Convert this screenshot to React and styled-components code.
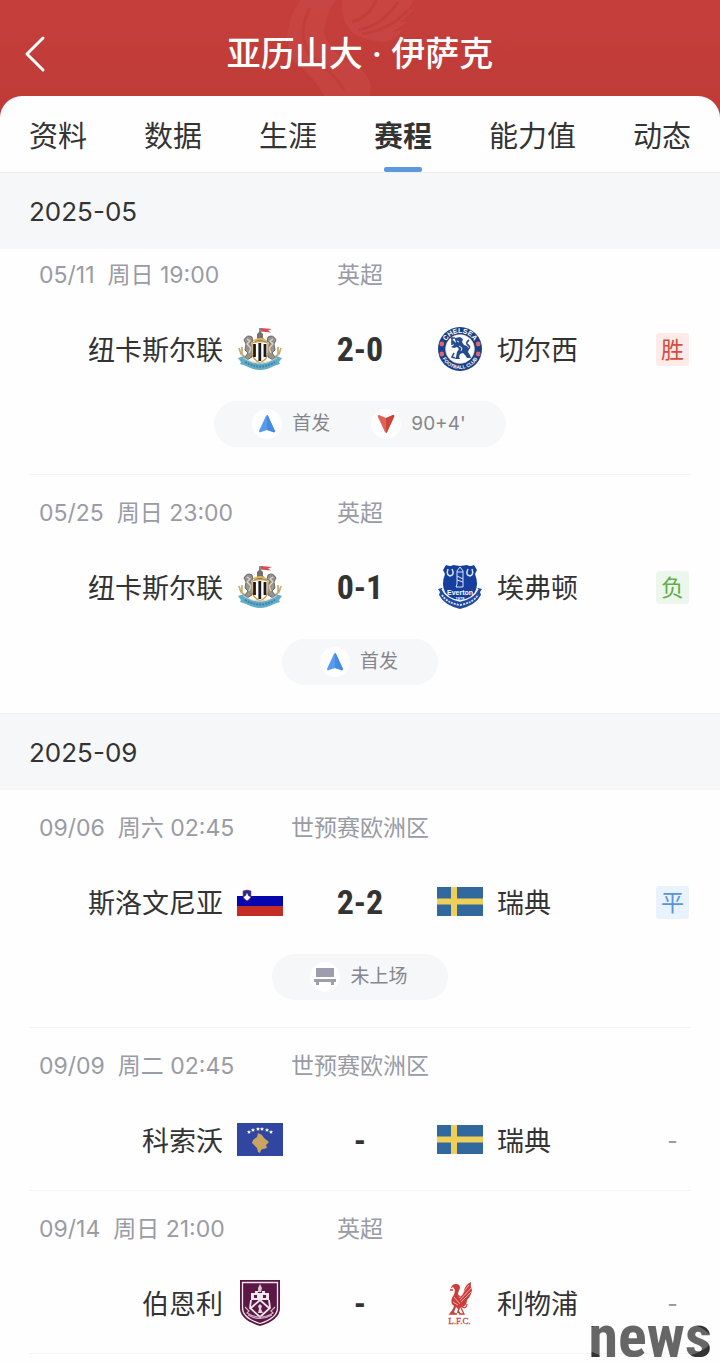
import styled, { createGlobalStyle, css } from "styled-components";

const GlobalStyle = createGlobalStyle`
    * {
        box-sizing: border-box;
    }
    body {
        margin: 0;
        background: #fefefe;
        color: #333;
        font-family: Inter, "Noto Sans CJK SC", sans-serif;
    }
    h1, h2, p, ul {
        margin: 0;
        padding: 0;
        font-weight: 400;
        list-style: none;
    }
    button {
        border: 0;
        padding: 0;
        background: none;
        color: inherit;
        font: inherit;
        cursor: pointer;
    }
`;

const fontCjk = `"Noto Sans CJK SC", sans-serif`;

const Page = styled.div`
    min-height: 100vh;
    background: #c03b37;
`;

const Header = styled.header`
    display: grid;
    grid-template-columns: 40px 1fr 40px;
    align-items: center;
    height: 96px;
    padding: 12px 15px 0;
    position: relative;
    background: linear-gradient(#c63e3b, #bf3c37);
`;

const HeaderBird = styled.svg`
    position: absolute;
    top: 0;
    left: 50%;
    width: 160px;
    height: 96px;
    transform: translateX(-50%);
    opacity: 0.6;
`;

const BackButton = styled.button`
    display: flex;
    align-items: center;
    justify-content: center;
    height: 44px;
    color: #fff;
`;

const Title = styled.h1`
    position: relative;
    color: #fff;
    font-family: Inter, ${fontCjk};
    font-size: 34px;
    font-weight: 500;
    line-height: 40px;
    text-align: center;
`;

const Panel = styled.main`
    min-height: calc(100vh - 96px);
    border-radius: 22px 22px 0 0;
    background: #fefefe;
    overflow: hidden;
`;

const Tabs = styled.nav`
    display: flex;
    justify-content: space-between;
    height: 76px;
    padding: 0 29px;
`;

const Tab = styled.button`
    display: flex;
    flex-direction: column;
    align-items: center;
    justify-content: space-between;
    padding-top: 17px;
    font-family: ${fontCjk};
    font-size: 29px;
    line-height: 42px;
    ${({ $active }) => $active && css`
        font-weight: 700;
        &::after {
            content: "";
            width: 38px;
            height: 5px;
            border-radius: 2px;
            background: #5b98dd;
        }
    `}
`;

const Month = styled.h2`
    height: 77px;
    padding: 0 29px;
    border-top: 1px solid #eceff3;
    background: #f6f7f9;
    font-size: 26px;
    line-height: 77px;
`;

const MatchList = styled.ul`
    padding: 0 29px;
`;

const Match = styled.li`
    padding: ${({ $tight }) => ($tight ? 14 : 26)}px 0 27px;
    border-bottom: 1px solid #f3f4f6;
    &:last-child {
        border-bottom-color: ${({ $open }) => ($open ? "#f3f4f6" : "transparent")};
    }
`;

const Meta = styled.div`
    display: grid;
    grid-template-columns: 1fr auto 1fr;
    height: 24px;
    padding: 0 10px;
    color: #999ba5;
    font-size: 23px;
    line-height: 24px;
    white-space: pre;
`;

const Teams = styled.div`
    display: grid;
    grid-template-columns: 1fr 154px 1fr;
    align-items: center;
    height: 46px;
    margin-top: 39px;
`;

const Side = styled.div`
    display: flex;
    align-items: center;
    justify-content: ${({ $home }) => ($home ? "flex-end" : "flex-start")};
    gap: 14px;
    font-family: ${fontCjk};
    font-size: 27px;
    line-height: 40px;
`;

const Score = styled.strong`
    font-family: "Roboto Condensed", Roboto, sans-serif;
    font-size: 34px;
    line-height: 40px;
    text-align: center;
`;

const tones = {
    win: { color: "#d94a3f", background: "#fdebea" },
    loss: { color: "#5fae4b", background: "#edf6ec" },
    draw: { color: "#5695dc", background: "#e8f3fe" },
    none: { color: "#9a9a9a", background: "transparent" },
};

const Result = styled.span`
    width: 33px;
    height: 33px;
    margin: 0 2px 0 auto;
    border-radius: 3px;
    color: ${({ $tone }) => tones[$tone].color};
    background: ${({ $tone }) => tones[$tone].background};
    font-family: Inter, ${fontCjk};
    font-size: 23px;
    line-height: 34px;
    text-align: center;
`;

const Pill = styled.div`
    display: flex;
    align-items: center;
    gap: 41px;
    width: fit-content;
    height: 46px;
    margin: 29px auto 0;
    padding: 0 40px 0 38px;
    border-radius: 23px;
    background: #f6f7f9;
`;

const Status = styled.span`
    display: flex;
    align-items: center;
    gap: 10px;
    color: #85868c;
    font-size: 19px;
    line-height: 32px;
`;

const StatusIcon = styled.svg`
    width: 30px;
    height: 30px;
    border-radius: 50%;
    background: #fefefe;
`;

const Watermark = styled.p`
    position: fixed;
    right: 8px;
    bottom: 6px;
    color: transparent;
    background: radial-gradient(ellipse 66px 22px at 46% 56%, #666 98%, #333 100%);
    background-clip: text;
    font-family: "Roboto Condensed", "Liberation Sans", sans-serif;
    font-size: 60px;
    font-weight: 700;
    line-height: 40px;
`;

const CrestSvg = styled.svg`
    flex: none;
    width: 46px;
    height: 46px;
`;

const Newcastle = () => (
    <CrestSvg viewBox="0 0 46 46" aria-hidden="true">
        <path d="M23 2v13" stroke="#777064" strokeWidth="1.6" />
        <path d="M24 2l11 1-4 1.500 3 2-10-1z" fill="#d84b50" />
        <path d="M20 8l3-3 3 3v4l4 4H17l3-3z" fill="#777169" />
        <path d="M17 15q6-4 12 0" fill="none" stroke="#ddb35c" strokeWidth="2" />
        <path d="M7 14q3-6 8-3l1 4-3 2 3 6-1 8-5 3-2-3 3-4-3-3 1-6zM39 14q-3-6-8-3l-1 4 3 2-3 6 1 8 5 3 2-3-3-4 3-3-1-6z" fill="#97938e" stroke="#56534f" strokeWidth=".8" />
        <path d="M10 13l3 2-3 3 4 4-2 5M36 13l-3 2 3 3-4 4 2 5" fill="none" stroke="#ddd9d2" strokeWidth="1.200" />
        <path d="M15 17q8-3 16 0v9q0 7-8 11-8-4-8-11z" fill="#fff" stroke="#c69a45" strokeWidth="1.300" />
        <path d="M17.500 18v13M22.800 17v18M28 18v13" stroke="#1d1b1b" strokeWidth="2.800" />
        <path d="M2 22l2 6 4 3M44 22l-2 6-4 3M5 21v7M41 21v7" fill="none" stroke="#c5aa72" strokeWidth="1.700" />
        <path d="M1 32l6-2 3 4q13 7 26 0l3-4 6 2-3 4 1 2-6 2q-14 8-28 0l-6-2 1-2z" fill="#62abc9" />
        <path d="M8 36q15 9 30 0" fill="none" stroke="#3f84a3" strokeWidth="2" strokeDasharray="2 1" />
        <path d="M6 32q17 10 34 0" fill="none" stroke="#d9d0b5" strokeWidth=".9" />
    </CrestSvg>
);

const Chelsea = () => (
    <CrestSvg viewBox="0 0 46 46" aria-hidden="true">
        <circle cx="23" cy="23" r="22" fill="#1b3f82" />
        <circle cx="23" cy="23" r="14.500" fill="#fff" stroke="#d7c69d" strokeWidth=".5" />
        <defs>
            <path id="chelsea-top" d="M7 23a16 16 0 0 1 32 0" />
            <path id="chelsea-bottom" d="M3 23a20 20 0 0 0 40 0" />
        </defs>
        <g fill="#fff" fontFamily="Liberation Sans" fontWeight="700" textAnchor="middle">
            <text fontSize="7"><textPath href="#chelsea-top" startOffset="50%">CHELSEA</textPath></text>
            <text fontSize="5"><textPath href="#chelsea-bottom" startOffset="50%">FOOTBALL CLUB</textPath></text>
        </g>
        <g fill="#d8667a">
            <circle cx="4.800" cy="18" r="2.400" />
            <circle cx="4.800" cy="28" r="2.400" />
            <circle cx="41.200" cy="18" r="2.400" />
            <circle cx="41.200" cy="28" r="2.400" />
        </g>
        <path d="M18 12l5-1 3 2-1 3 2 3 3 1 2 3-1 3 2 3 1 3h-4l-2-3-2-2-3 1-1 3 1 2h-5l1-2 1-5 2-3-2-2-3 1-3-1 3-2-3-3 2-2 3 3-1-4z" fill="#244d91" />
        <path d="M15 12v7M14 12h4M29 24q6-2 2-5-3-2 1-5M17 27l-2 4 3 1" fill="none" stroke="#244d91" strokeWidth="1.600" />
        <path d="M20 15l2 1M22 20l3 2-1 3" fill="none" stroke="#fff" strokeWidth=".9" />
    </CrestSvg>
);

const Everton = () => (
    <CrestSvg viewBox="0 0 46 46" aria-hidden="true">
        <path d="M9 1q5 2 7 0l7 1 7-1q3 2 7 0l3 5-2 4q4 10 0 18-3 8-15 15Q11 36 8 28q-4-8 0-18L6 6z" fill="#153f9f" />
        <path d="M1 25l4-1q4 10 18 13 14-3 18-13l4 1-2 3 1 3q-5 10-21 14Q7 41 2 31l1-3z" fill="#224a9f" />
        <path d="M5 25q5 10 18 12 13-2 18-12" fill="none" stroke="#fff" strokeWidth="1.300" />
        <path d="M5 31q5 8 18 10 13-2 18-10" fill="none" stroke="#d4dded" strokeWidth="1.800" strokeDasharray="2 1" />
        <path d="M11 5q-2 6 2 7 5-1 2-7M31 5q-3 6 2 7 4-1 2-7" fill="none" stroke="#dce4f4" strokeWidth="1.500" />
        <path d="M20 7l3-4 3 4v16h-7l1-3zM20 8h6M20 12l6 3M20 16l6 2" fill="none" stroke="#dce4f4" strokeWidth="1" />
        <g fill="#fff" fontFamily="Liberation Sans" fontWeight="700" textAnchor="middle">
            <text x="23" y="31" fontSize="7">Everton</text>
            <text x="23" y="36" fontSize="4">1878</text>
        </g>
    </CrestSvg>
);

const Slovenia = () => (
    <CrestSvg viewBox="0 0 46 46" aria-hidden="true">
        <path d="M0 17h46v11H0z" fill="#0506ad" />
        <path d="M0 27h46v10H0z" fill="#c42d24" />
        <path d="M6 12q4-2 8 0v5q0 3-4 5-4-2-4-5z" fill="#24308f" stroke="#bd3649" strokeWidth=".6" />
        <path d="M6.500 18l2-1 1.500-3 1.500 3 2 1-1.500 2-2 1.500-2-1.500z" fill="#fff" />
    </CrestSvg>
);

const Sweden = () => (
    <CrestSvg viewBox="0 0 46 46" aria-hidden="true">
        <path d="M0 8h46v29H0z" fill="#31699e" />
        <path d="M0 19.500h46v6H0zM14 8h6v29h-6z" fill="#efcf57" />
    </CrestSvg>
);

const Kosovo = () => (
    <CrestSvg viewBox="0 0 46 46" aria-hidden="true">
        <path d="M0 6h46v33H0z" fill="#3146a0" />
        <path d="M21 16l4 2 2 3 5 4-3 3 1 3-4 1-2 1-1 3-2-1-1-4-5-5 1-3 4-3z" fill="#c9a562" />
        <path
            d="M12 13l.6 1.200 1.400.2-1 1 .2 1.400-1.200-.7-1.200.7.2-1.400-1-1 1.400-.2z"
            id="kosovo-star"
            fill="#fff"
        />
        {[[4, -2], [9, -3], [13, -3], [18, -2], [22, 0]].map(([x, y]) => (
            <use key={x} href="#kosovo-star" x={x} y={y} />
        ))}
    </CrestSvg>
);

const Burnley = () => (
    <CrestSvg viewBox="0 0 46 46" aria-hidden="true">
        <path d="M3 0h40v28q0 12-20 18Q3 40 3 28z" fill="#5c1744" />
        <path d="M5.500 2.500h35V28q0 10-17.500 15.500Q5.500 38 5.500 28z" fill="none" stroke="#efe7ec" strokeWidth="1.300" />
        <path d="M14 13h4v-2h3v2h4v-2h3v2h4v7H14z" fill="#efe7ec" />
        <path d="M23 4l2 4-1 4h-3V8z" fill="#d9c6d2" />
        <path d="M17 15h3v3h-3zM26 15h3v3h-3z" fill="#5c1744" />
        <path d="M14 20l-1 8 10 9 10-9-1-8M14 28l9-8 9 8" fill="none" stroke="#efe7ec" strokeWidth="1.800" />
        <path d="M21 26l2-2 2 2-1 3 2 4h-5l1-4z" fill="#e2d4dd" />
        <path d="M8 27l4 4-2 2q13 8 26 0l-2-2 4-4M11 35q12 7 24 0" fill="none" stroke="#cdb5c4" strokeWidth="1.200" />
    </CrestSvg>
);

const birdBody = "M14 8q1-4 5-4 4 0 4 4l-2 5q0 3 3 3 3-2 3-6 2-6 7-8-1 4 1 8-1 6-5 10 0 5-4 7l-3 1-1 3 2 3-4-1 1-4-2-2-2 5 2 2h-5l1-3 2-5q-4-3-2-8 3-4 3-8l-2-3-3 2z";

const Liverpool = () => (
    <CrestSvg viewBox="0 0 46 46" aria-hidden="true">
        <path d={birdBody} fill="#cb3e3b" />
        <path d="M22 18l10-13M23 20l11-12M24 22l10-10M17 17l6 7M16 22l5 3" fill="none" stroke="#f3c9c5" strokeWidth=".8" />
        <path d="M25 27q5 2 5-3M17 29l-4 5h7M24 28l3 6h-5M13 10h3" fill="none" stroke="#cb3e3b" strokeWidth="1.300" />
        <text x="22.500" y="44" fill="#c34643" stroke="#c34643" strokeWidth=".3" fontFamily="Liberation Serif" fontSize="9" textAnchor="middle">L.F.C.</text>
    </CrestSvg>
);

const statusIcons = {
    on: (
        <>
            <path d="M15 6q1 0 2 3l6 13q0 2-2 1l-6-2-6 2q-2 1-2-1l6-13q1-3 2-3z" fill="#559cef" />
            <path d="M15 6q1 0 2 3l6 13q0 2-2 1l-6-2z" fill="#458be4" />
        </>
    ),
    off: (
        <>
            <path d="M15 24q-1 0-2-3L7 8q-1-2 1-2l7 3 7-3q2 0 1 2l-6 13q-1 3-2 3z" fill="#e16257" />
            <path d="M15 24q1 0 2-3l6-13q1-2-1-2l-7 3z" fill="#c94439" />
        </>
    ),
    bench: <path d="M6 6h18v9H6zM4 17h22v3h-2v3h-3v-3H9v3H6v-3H4z" fill="#9c9dad" />,
};

const teams = {
    newcastle: ["纽卡斯尔联", Newcastle],
    chelsea: ["切尔西", Chelsea],
    everton: ["埃弗顿", Everton],
    slovenia: ["斯洛文尼亚", Slovenia],
    sweden: ["瑞典", Sweden],
    kosovo: ["科索沃", Kosovo],
    burnley: ["伯恩利", Burnley],
    liverpool: ["利物浦", Liverpool],
};

const tabs = ["资料", "数据", "生涯", "赛程", "能力值", "动态"];

const months = [
    {
        name: "2025-05",
        matches: [
            { date: "05/11  周日 19:00", league: "英超", home: "newcastle", away: "chelsea", score: "2-0", result: "胜", tone: "win", status: [["on", "首发"], ["off", "90+4'"]] },
            { date: "05/25  周日 23:00", league: "英超", home: "newcastle", away: "everton", score: "0-1", result: "负", tone: "loss", status: [["on", "首发"]] },
        ],
    },
    {
        name: "2025-09",
        matches: [
            { date: "09/06  周六 02:45", league: "世预赛欧洲区", home: "slovenia", away: "sweden", score: "2-2", result: "平", tone: "draw", status: [["bench", "未上场"]] },
            { date: "09/09  周二 02:45", league: "世预赛欧洲区", home: "kosovo", away: "sweden", score: "-", result: "-", tone: "none" },
            { date: "09/14  周日 21:00", league: "英超", home: "burnley", away: "liverpool", score: "-", result: "-", tone: "none" },
        ],
    },
];

const MatchItem = ({ match, tight, open }) => {
    const [homeName, HomeCrest] = teams[match.home];
    const [awayName, AwayCrest] = teams[match.away];
    return (
        <Match $tight={tight} $open={open}>
            <Meta>
                <time>{match.date}</time>
                <span>{match.league}</span>
            </Meta>
            <Teams>
                <Side $home>
                    <span>{homeName}</span>
                    <HomeCrest />
                </Side>
                <Score>{match.score}</Score>
                <Side>
                    <AwayCrest />
                    <span>{awayName}</span>
                    <Result $tone={match.tone}>{match.result}</Result>
                </Side>
            </Teams>
            {match.status && (
                <Pill>
                    {match.status.map(([icon, label]) => (
                        <Status key={icon}>
                            <StatusIcon viewBox="0 0 30 30" aria-hidden="true">{statusIcons[icon]}</StatusIcon>
                            {label}
                        </Status>
                    ))}
                </Pill>
            )}
        </Match>
    );
};

const App = () => {
    return (
        <>
            <GlobalStyle />
            <Page>
                <Header>
                    <HeaderBird viewBox="0 0 160 96" aria-hidden="true">
                        <path d="M20 0Q-2 34 14 62q20 14 30 34h46q4-16-10-28-30-12-36-36Q46 12 56 0z" fill="#c94a47" />
                        <path d="M62 0q-2 22 12 34 16 8 32 8 12-4 16-12l-10 2 16-10-8 0 14-12-6 0 6-10z" fill="#ca4b48" />
                        <path d="M78 30q24-4 40-28M82 34q28-4 46-24M72 22q18-6 24-22M30 8q-14 26 0 48 22 14 34 34" fill="none" stroke="#c23f3b" strokeWidth="3" />
                    </HeaderBird>
                    <BackButton aria-label="返回">
                        <svg width="22" height="38" viewBox="0 0 22 38" fill="none" stroke="currentColor" strokeWidth="3" strokeLinecap="round" strokeLinejoin="round">
                            <path d="M19 3L3 19l16 16" />
                        </svg>
                    </BackButton>
                    <Title>亚历山大 · 伊萨克</Title>
                </Header>
                <Panel>
                    <Tabs>
                        {tabs.map((tab) => (
                            <Tab key={tab} $active={tab === "赛程"}>{tab}</Tab>
                        ))}
                    </Tabs>
                    {months.map((month, m) => (
                        <section key={month.name}>
                            <Month>{month.name}</Month>
                            <MatchList>
                                {month.matches.map((match, i) => (
                                    <MatchItem
                                        key={match.date}
                                        match={match}
                                        tight={m === 0 && i === 0}
                                        open={m === months.length - 1}
                                    />
                                ))}
                            </MatchList>
                        </section>
                    ))}
                </Panel>
                <Watermark>news</Watermark>
            </Page>
        </>
    );
};

export default App;
